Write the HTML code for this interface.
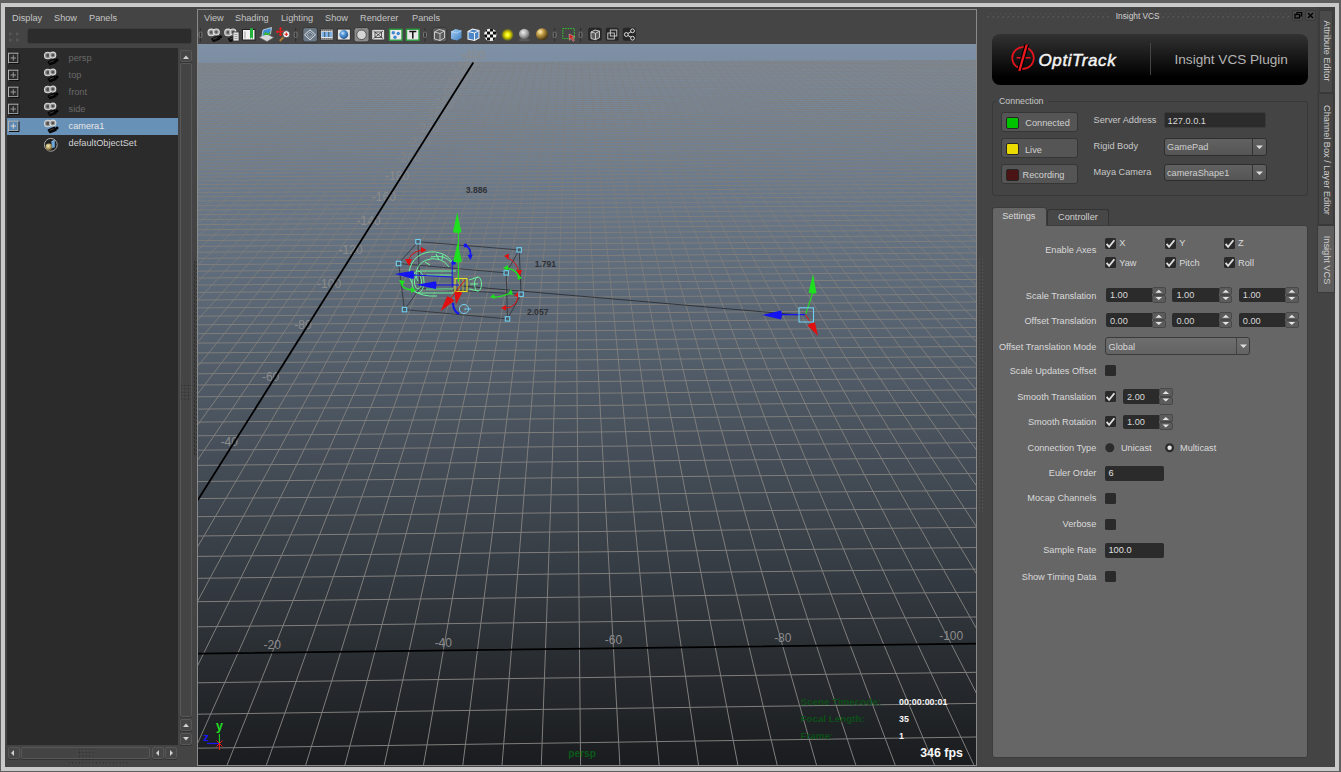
<!DOCTYPE html>
<html><head><meta charset="utf-8">
<style>
*{margin:0;padding:0;box-sizing:border-box}
html,body{width:1341px;height:772px;overflow:hidden}
body{background:#5f5f5f;font-family:"Liberation Sans",sans-serif;position:relative}
.a{position:absolute}
.t{position:absolute;white-space:nowrap;line-height:1;font-size:9.2px;color:#c4c4c4;margin-top:0.7px}
.btn{position:absolute;border:1px solid #333;border-radius:2px;background:#4f4f4f}
.sb{position:absolute;border:1px solid #575757;border-radius:2px;background:#464646;box-shadow:0 1px 0 #333}
</style></head><body>
<!-- frame -->
<div class="a" style="left:1px;top:3px;width:1338px;height:768px;background:#c9c9c9"></div>
<div class="a" style="left:5px;top:7px;width:1330px;height:760px;background:#444"></div>

<!-- ============ OUTLINER ============ -->
<div class="t" style="left:12px;top:13px">Display</div>
<div class="t" style="left:54px;top:13px">Show</div>
<div class="t" style="left:89px;top:13px">Panels</div>
<div class="a" style="left:27px;top:28px;width:165px;height:16px;background:#2c2c2c;border-radius:3px;border:1px solid #3c3c3c"></div>
<!-- list -->
<div class="a" style="left:7px;top:48px;width:171px;height:697px;background:#2b2b2b"></div>
<div class="a" style="left:7px;top:118px;width:171px;height:17px;background:#6891b8"></div>
<div class="t" style="top:53.5px;left:68.6px;color:#6a6a6a;">persp</div>
<div class="t" style="top:70.5px;left:68.6px;color:#6a6a6a;">top</div>
<div class="t" style="top:87.5px;left:68.6px;color:#6a6a6a;">front</div>
<div class="t" style="top:104.5px;left:68.6px;color:#6a6a6a;">side</div>
<div class="t" style="top:121.5px;left:68.6px;color:#e6e6e6;">camera1</div>
<div class="t" style="top:138.5px;left:68.6px;color:#d4d4d4;">defaultObjectSet</div>
<svg class="a" style="left:0;top:0" width="180" height="160"><rect x="8.5" y="53.2" width="9.5" height="9.5" fill="#2b2b2b" stroke="#b0b0b0" stroke-width="1"/><path d="M13.25 55.2v5.5M10.5 58.0h5.5" stroke="#9a9a9a" stroke-width="1"/><path d="M9 63.5h10v-10" stroke="#111" stroke-width="1" fill="none"/><g transform="translate(44,51.7)"><circle cx="3.8" cy="3.8" r="3.3" fill="#8a8a8a" stroke="#d8d8d8" stroke-width="1.1"/><circle cx="3.8" cy="3.8" r="1.4" fill="#4a4a4a"/><circle cx="8.8" cy="3.4" r="3" fill="#8a8a8a" stroke="#d8d8d8" stroke-width="1.1"/><circle cx="8.8" cy="3.4" r="1.2" fill="#4a4a4a"/><path d="M4.5 10.3l5.8-2.3 1.6 2.4-5.8 2.3z" fill="#0a0a0a" stroke="#050505" stroke-width="1.8" stroke-linejoin="round"/><path d="M5.5 10.6l4.3-1.7" stroke="#666" stroke-width="0.6"/><circle cx="13" cy="8.2" r="1.5" fill="#000"/></g><rect x="8.5" y="70.2" width="9.5" height="9.5" fill="#2b2b2b" stroke="#b0b0b0" stroke-width="1"/><path d="M13.25 72.2v5.5M10.5 75.0h5.5" stroke="#9a9a9a" stroke-width="1"/><path d="M9 80.5h10v-10" stroke="#111" stroke-width="1" fill="none"/><g transform="translate(44,68.7)"><circle cx="3.8" cy="3.8" r="3.3" fill="#8a8a8a" stroke="#d8d8d8" stroke-width="1.1"/><circle cx="3.8" cy="3.8" r="1.4" fill="#4a4a4a"/><circle cx="8.8" cy="3.4" r="3" fill="#8a8a8a" stroke="#d8d8d8" stroke-width="1.1"/><circle cx="8.8" cy="3.4" r="1.2" fill="#4a4a4a"/><path d="M4.5 10.3l5.8-2.3 1.6 2.4-5.8 2.3z" fill="#0a0a0a" stroke="#050505" stroke-width="1.8" stroke-linejoin="round"/><path d="M5.5 10.6l4.3-1.7" stroke="#666" stroke-width="0.6"/><circle cx="13" cy="8.2" r="1.5" fill="#000"/></g><rect x="8.5" y="87.2" width="9.5" height="9.5" fill="#2b2b2b" stroke="#b0b0b0" stroke-width="1"/><path d="M13.25 89.2v5.5M10.5 92.0h5.5" stroke="#9a9a9a" stroke-width="1"/><path d="M9 97.5h10v-10" stroke="#111" stroke-width="1" fill="none"/><g transform="translate(44,85.7)"><circle cx="3.8" cy="3.8" r="3.3" fill="#8a8a8a" stroke="#d8d8d8" stroke-width="1.1"/><circle cx="3.8" cy="3.8" r="1.4" fill="#4a4a4a"/><circle cx="8.8" cy="3.4" r="3" fill="#8a8a8a" stroke="#d8d8d8" stroke-width="1.1"/><circle cx="8.8" cy="3.4" r="1.2" fill="#4a4a4a"/><path d="M4.5 10.3l5.8-2.3 1.6 2.4-5.8 2.3z" fill="#0a0a0a" stroke="#050505" stroke-width="1.8" stroke-linejoin="round"/><path d="M5.5 10.6l4.3-1.7" stroke="#666" stroke-width="0.6"/><circle cx="13" cy="8.2" r="1.5" fill="#000"/></g><rect x="8.5" y="104.2" width="9.5" height="9.5" fill="#2b2b2b" stroke="#b0b0b0" stroke-width="1"/><path d="M13.25 106.2v5.5M10.5 109.0h5.5" stroke="#9a9a9a" stroke-width="1"/><path d="M9 114.5h10v-10" stroke="#111" stroke-width="1" fill="none"/><g transform="translate(44,102.7)"><circle cx="3.8" cy="3.8" r="3.3" fill="#8a8a8a" stroke="#d8d8d8" stroke-width="1.1"/><circle cx="3.8" cy="3.8" r="1.4" fill="#4a4a4a"/><circle cx="8.8" cy="3.4" r="3" fill="#8a8a8a" stroke="#d8d8d8" stroke-width="1.1"/><circle cx="8.8" cy="3.4" r="1.2" fill="#4a4a4a"/><path d="M4.5 10.3l5.8-2.3 1.6 2.4-5.8 2.3z" fill="#0a0a0a" stroke="#050505" stroke-width="1.8" stroke-linejoin="round"/><path d="M5.5 10.6l4.3-1.7" stroke="#666" stroke-width="0.6"/><circle cx="13" cy="8.2" r="1.5" fill="#000"/></g><rect x="8.5" y="121.2" width="9.5" height="9.5" fill="#5a86b0" stroke="#b0b0b0" stroke-width="1"/><path d="M13.25 123.2v5.5M10.5 126.0h5.5" stroke="#d8d8d8" stroke-width="1"/><path d="M9 131.5h10v-10" stroke="#111" stroke-width="1" fill="none"/><g transform="translate(44,119.7)"><circle cx="3.8" cy="3.8" r="3.3" fill="#8a8a8a" stroke="#d8d8d8" stroke-width="1.1"/><circle cx="3.8" cy="3.8" r="1.4" fill="#4a4a4a"/><circle cx="8.8" cy="3.4" r="3" fill="#8a8a8a" stroke="#d8d8d8" stroke-width="1.1"/><circle cx="8.8" cy="3.4" r="1.2" fill="#4a4a4a"/><path d="M4.5 10.3l5.8-2.3 1.6 2.4-5.8 2.3z" fill="#0a0a0a" stroke="#050505" stroke-width="1.8" stroke-linejoin="round"/><path d="M5.5 10.6l4.3-1.7" stroke="#666" stroke-width="0.6"/><circle cx="13" cy="8.2" r="1.5" fill="#000"/></g><defs><radialGradient id="gsp" cx="0.4" cy="0.35" r="0.7"><stop offset="0" stop-color="#f4ecc0"/><stop offset="0.5" stop-color="#b8a46a"/><stop offset="1" stop-color="#4a3e1c"/></radialGradient></defs><circle cx="50.8" cy="144.8" r="6.4" fill="#202020" stroke="#a8a8a8" stroke-width="1"/><path d="M51.5 141.6l3.3-1.6v7.2l-3.3 1.2z" fill="#6aa6dc"/><path d="M51.5 141.6l3.3-1.6" stroke="#bfe0ff" stroke-width="0.6"/><circle cx="48.9" cy="147.0" r="3.4" fill="url(#gsp)"/></svg><svg class="a" style="left:7px;top:29px" width="16" height="16"><g fill="#555"><path d="M2 3l4 2-4 2zM9 3l4 2-4 2zM2 9l4 2-4 2zM9 9l4 2-4 2z"/></g></svg>
<!-- v scrollbar -->
<div class="sb" style="left:180px;top:50px;width:12px;height:12px"></div>
<div class="sb" style="left:180px;top:63px;width:12px;height:654px;background:#444"></div>
<div class="sb" style="left:180px;top:719px;width:12px;height:12px"></div>
<div class="sb" style="left:180px;top:733px;width:12px;height:12px"></div>
<!-- h scrollbar -->
<div class="sb" style="left:8px;top:747px;width:12px;height:12px"></div>
<div class="sb" style="left:21px;top:747px;width:129px;height:12px;background:#444"></div>
<div class="sb" style="left:152px;top:747px;width:12px;height:12px"></div>
<div class="sb" style="left:165px;top:747px;width:12px;height:12px"></div>
<svg class="a" style="left:0;top:0" width="200" height="772">
<g fill="#cfcfcf">
<path d="M183 59l3-3.5 3 3.5z"/><path d="M183 727l3-3.5 3 3.5z"/><path d="M183 737l3 3.5 3-3.5z"/>
<path d="M11 753l3-3v6z"/><path d="M156 753l3-3v6z"/><path d="M173 753l-3-3v6z"/>
</g>
</svg>

<svg class="a" style="left:0;top:0" width="200" height="772">
<defs>
<pattern id="dots" width="3.4" height="3.4" patternUnits="userSpaceOnUse"><rect x="0.8" y="0.8" width="1.2" height="1.2" fill="#2a2a2a"/><rect x="2" y="2" width="0.8" height="0.8" fill="#5a5a5a"/></pattern>
<pattern id="zig" width="3" height="4" patternUnits="userSpaceOnUse"><path d="M0 4L3 0V2.2L0 4z" fill="#262626"/></pattern>
</defs>
<rect x="181.2" y="383" width="10" height="17" fill="url(#dots)"/>
<rect x="77" y="749.5" width="17" height="10" fill="url(#dots)"/>
<rect x="67" y="761.5" width="61" height="3.4" fill="url(#dots)"/>
<rect x="194" y="261" width="3" height="195" fill="url(#zig)"/>
</svg>
<!-- ============ VIEWPORT PANEL ============ -->
<div class="a" style="left:197px;top:9px;width:780px;height:757px;border:1px solid #8a8a8a;background:#454545"></div>
<div class="t" style="left:204px;top:13px">View</div>
<div class="t" style="left:235px;top:13px">Shading</div>
<div class="t" style="left:281px;top:13px">Lighting</div>
<div class="t" style="left:325px;top:13px">Show</div>
<div class="t" style="left:360px;top:13px">Renderer</div>
<div class="t" style="left:412px;top:13px">Panels</div>
<svg class="a" style="left:0;top:0" width="650" height="44">
<defs>
<radialGradient id="gbl" cx="0.38" cy="0.35" r="0.7"><stop offset="0" stop-color="#cfe6ff"/><stop offset="0.4" stop-color="#4f95d6"/><stop offset="1" stop-color="#1d4f8a"/></radialGradient>
<radialGradient id="ggr" cx="0.4" cy="0.35" r="0.7"><stop offset="0" stop-color="#f0f0f0"/><stop offset="0.6" stop-color="#9a9a9a"/><stop offset="1" stop-color="#555"/></radialGradient>
<radialGradient id="ggo" cx="0.35" cy="0.3" r="0.75"><stop offset="0" stop-color="#fff6c8"/><stop offset="0.35" stop-color="#c9a24a"/><stop offset="1" stop-color="#3a2a08"/></radialGradient>
<radialGradient id="gye" cx="0.5" cy="0.5" r="0.5"><stop offset="0" stop-color="#ffff90"/><stop offset="0.3" stop-color="#f4f000"/><stop offset="0.65" stop-color="#b8b400" stop-opacity="0.85"/><stop offset="1" stop-color="#888800" stop-opacity="0"/></radialGradient>
<linearGradient id="gcube" x1="0" y1="0" x2="1" y2="1"><stop offset="0" stop-color="#a8d0f4"/><stop offset="1" stop-color="#3f7fc2"/></linearGradient>
</defs>
<path d="M200.5 28v14" stroke="#2e2e2e" stroke-width="1"/><rect x="199.0" y="32" width="3" height="5.5" rx="1.2" fill="none" stroke="#7a7a7a" stroke-width="0.9"/>
<g transform="translate(207.5,28.6)"><circle cx="3.8" cy="3.8" r="3.3" fill="#9a9a9a" stroke="#dcdcdc" stroke-width="1.1"/><circle cx="3.8" cy="3.8" r="1.4" fill="#555"/><circle cx="8.8" cy="3.4" r="3" fill="#9a9a9a" stroke="#dcdcdc" stroke-width="1.1"/><circle cx="8.8" cy="3.4" r="1.2" fill="#555"/><path d="M4.5 10.3l5.8-2.3 1.6 2.4-5.8 2.3z" fill="#111" stroke="#0a0a0a" stroke-width="1.6" stroke-linejoin="round"/><path d="M5.5 10.6l4.3-1.7" stroke="#777" stroke-width="0.6"/><circle cx="13" cy="8.2" r="1.5" fill="#000"/></g>
<g transform="translate(224.2,28.6)"><circle cx="3.8" cy="3.8" r="3.3" fill="#9a9a9a" stroke="#dcdcdc" stroke-width="1.1"/><circle cx="3.8" cy="3.8" r="1.4" fill="#555"/><circle cx="8.8" cy="3.4" r="3" fill="#9a9a9a" stroke="#dcdcdc" stroke-width="1.1"/><circle cx="8.8" cy="3.4" r="1.2" fill="#555"/><path d="M4.5 10.3l5.8-2.3 1.6 2.4-5.8 2.3z" fill="#111" stroke="#0a0a0a" stroke-width="1.6" stroke-linejoin="round"/><path d="M5.5 10.6l4.3-1.7" stroke="#777" stroke-width="0.6"/><circle cx="13" cy="8.2" r="1.5" fill="#000"/></g>
<rect x="233" y="32" width="6" height="9" fill="#e4e4e4" stroke="#333" stroke-width="0.8"/><path d="M234.5 34.5h3M234.5 36.5h3M234.5 38.5h3" stroke="#888" stroke-width="0.8"/>
<rect x="242.5" y="29.5" width="12.5" height="10.5" fill="#f2f2f2" stroke="#222" stroke-width="1"/><path d="M245 31.5v7" stroke="#888" stroke-width="0.8"/><path d="M250 28.2h3v10.8l-1.5-1.6-1.5 1.6z" fill="#22b33a"/>
<path d="M259.5 37.5l7.5 4 6.5-4-7.5-4z" fill="#d8d8d8" stroke="#777" stroke-width="0.6"/><path d="M262 36.5l1-6.5 8.5-2.5-1 6.5z" fill="#3d8cd8" stroke="#ddd" stroke-width="0.8"/><path d="M263 35l2.5-3 3 1.5 2-2.5-0.7 4z" fill="#39b536"/>
<path d="M280.5 27.5v8.5M276.2 31.7h8.6" stroke="#e02018" stroke-width="1.5"/><path d="M280.5 27l-1.8 2.2h3.6zM280.5 36.5l-1.8-2.2h3.6zM275.7 31.7l2.2-1.8v3.6zM285.3 31.7l-2.2-1.8v3.6z" fill="#e02018"/><circle cx="286.3" cy="34.2" r="3.6" fill="#f2f2f2" stroke="#3a3a3a" stroke-width="0.8"/><path d="M286.3 32.4v3.6M284.5 34.2h3.6" stroke="#e02018" stroke-width="1.1"/><path d="M283.4 37.2l-3.6 3.8" stroke="#b07a38" stroke-width="2"/>
<path d="M295.7 28v14" stroke="#2e2e2e" stroke-width="1"/><rect x="294.2" y="32" width="3" height="5.5" rx="1.2" fill="none" stroke="#7a7a7a" stroke-width="0.9"/>
<rect x="302.8" y="27.6" width="14.599999999999966" height="14.4" rx="2.5" fill="#6b7885" stroke="#353535" stroke-width="1"/>
<path d="M304.5 34.8l5.5-5 5.5 5-5.5 5z" fill="none" stroke="#d8dde4" stroke-width="1"/><path d="M307 34.8l3-2.7 3 2.7-3 2.7z" fill="none" stroke="#aeb6c0" stroke-width="0.8"/>
<rect x="320.6" y="29.1" width="12.5" height="10.9" fill="#e8e8e8" stroke="#333" stroke-width="0.9"/><rect x="321.6" y="32" width="10.5" height="5" fill="#7fb4ea"/><path d="M321.6 30.5h10.5M321.6 38.6h10.5" stroke="#222" stroke-width="1.4" stroke-dasharray="1 1"/><path d="M324.7 32v5M328.8 32v5" stroke="#333" stroke-width="0.8"/>
<rect x="337.3" y="29.1" width="13" height="10.9" fill="#e4e4e4" stroke="#2a2a2a" stroke-width="0.9"/><circle cx="343.8" cy="34.5" r="4.4" fill="url(#gbl)"/>
<rect x="354" y="27.6" width="15.100000000000023" height="14.4" rx="2.5" fill="#8a8a8a" stroke="#353535" stroke-width="1"/>
<circle cx="361.5" cy="34.8" r="4.8" fill="#d6d6d6" stroke="#555" stroke-width="1"/>
<rect x="371.7" y="29.3" width="13" height="10.7" rx="1.5" fill="#dcdcdc" stroke="#333" stroke-width="0.9"/><path d="M373.5 31l9.5 7.5M383 31l-9.5 7.5M375 32h6.5v5.5h-6.5z" stroke="#333" stroke-width="0.8" fill="none"/>
<rect x="389.5" y="29.3" width="12.5" height="10.9" fill="#e9e9e9" stroke="#2ea043" stroke-width="1.4"/><circle cx="393.3" cy="32.8" r="1.7" fill="#3f86d0"/><circle cx="398.2" cy="33.5" r="1.7" fill="#3f86d0"/><circle cx="395" cy="37.3" r="1.7" fill="#3f86d0"/>
<rect x="406.5" y="29.3" width="12.5" height="10.9" fill="#e9e9e9" stroke="#2ea043" stroke-width="1.4"/><path d="M409.3 31.5h7M412.8 31.5v7" stroke="#111" stroke-width="1.5"/>
<path d="M425 28v14" stroke="#2e2e2e" stroke-width="1"/><rect x="423.5" y="32" width="3" height="5.5" rx="1.2" fill="none" stroke="#7a7a7a" stroke-width="0.9"/>
<rect x="432.2" y="27.6" width="14.699999999999989" height="14.4" rx="2.5" fill="#5a5a5a" stroke="#353535" stroke-width="1"/>
<path d="M434.5 32l4.5-2.5 5.5 1.5v7l-4.5 2.5-5.5-1.5z M434.5 32l5.5 1.5 4.5-2.5 M440 33.5v7" fill="none" stroke="#d4d4d4" stroke-width="0.9"/>
<path d="M451 31.5l4.5-2.5 6 1.5v7.5l-4.5 2.5-6-1.5z" fill="url(#gcube)"/><path d="M451 31.5l6 1.5 4.5-2.5" fill="none" stroke="#cfe6ff" stroke-width="0.6"/>
<path d="M468 31.5l4.5-2.5 6.5 1.5v7.5l-4.5 2.5-6.5-1.5z" fill="#4c86c6" stroke="#f0f0f0" stroke-width="1.1"/><path d="M468 31.5l6.5 1.5 4.5-2.5M474.5 33v8" fill="none" stroke="#f0f0f0" stroke-width="1"/>
<clipPath id="csp"><circle cx="490.3" cy="34.8" r="6.3"/></clipPath><g clip-path="url(#csp)"><rect x="484" y="28.5" width="12.6" height="12.6" fill="#f2f2f2"/><path d="M484 28.5h3v3h-3zM490 28.5h3v3h-3zM487 31.5h3v3h-3zM493 31.5h3v3h-3zM484 34.5h3v3h-3zM490 34.5h3v3h-3zM487 37.5h3v3h-3zM493 37.5h3v3h-3z" fill="#111"/></g>
<circle cx="507.5" cy="34.8" r="6.5" fill="url(#gye)"/>
<ellipse cx="524.3" cy="40" rx="5.5" ry="1.3" fill="#5a5a5a"/><circle cx="524.3" cy="34" r="5.3" fill="url(#ggr)"/>
<circle cx="542" cy="34.3" r="6" fill="url(#ggo)"/>
<path d="M554.7 28v14" stroke="#2e2e2e" stroke-width="1"/><rect x="553.2" y="32" width="3" height="5.5" rx="1.2" fill="none" stroke="#7a7a7a" stroke-width="0.9"/>
<rect x="562.8" y="28.6" width="11.5" height="10" fill="none" stroke="#2fcf2f" stroke-width="1" stroke-dasharray="1.5 1"/><path d="M569 34l5.8 2.8-2.4 0.8 2 2.8-1.3 0.9-2-2.8-1.7 1.7z" fill="#d02020" stroke="#eee" stroke-width="0.4"/>
<path d="M580.6 28v14" stroke="#2e2e2e" stroke-width="1"/><rect x="579.1" y="32" width="3" height="5.5" rx="1.2" fill="none" stroke="#7a7a7a" stroke-width="0.9"/>
<rect x="588.2" y="27.8" width="13.5" height="13" rx="2" fill="#262626"/>
<rect x="605.7" y="27.8" width="13.0" height="13" rx="2" fill="#262626"/>
<rect x="622.7" y="27.8" width="13.0" height="13" rx="2" fill="#262626"/>
<path d="M591 32l4-2 4.5 1.2v6.5l-4 2-4.5-1.2z M591 32l4.5 1.2 4-2 M595.5 33.2v6.5" fill="#5c5c5c" stroke="#d8d8d8" stroke-width="0.9"/>
<rect x="607.8" y="33" width="6.5" height="6" fill="none" stroke="#d0d0d0" stroke-width="0.9"/><rect x="610.3" y="30" width="6.5" height="6" fill="none" stroke="#d0d0d0" stroke-width="0.9"/>
<path d="M626.3 34.5l6-3.5M626.3 34.5l6 3.5" stroke="#d8d8d8" stroke-width="1"/><circle cx="626.3" cy="34.5" r="1.9" fill="#262626" stroke="#e0e0e0" stroke-width="1"/><circle cx="632.5" cy="30.8" r="1.9" fill="#262626" stroke="#e0e0e0" stroke-width="1"/><circle cx="632.5" cy="38.2" r="1.9" fill="#262626" stroke="#e0e0e0" stroke-width="1"/>
</svg>
<svg class="a" style="left:0;top:0" width="1341" height="772">
<defs>
<linearGradient id="vg" x1="0" y1="44" x2="0" y2="765" gradientUnits="userSpaceOnUse">
<stop offset="0" stop-color="#7f91a6"/>
<stop offset="1" stop-color="#1a1c1e"/>
</linearGradient>
<linearGradient id="amg" x1="0" y1="60" x2="0" y2="380" gradientUnits="userSpaceOnUse"><stop offset="0" stop-color="#fff" stop-opacity="0.45"/><stop offset="1" stop-color="#fff" stop-opacity="1"/></linearGradient>
<mask id="amask" maskUnits="userSpaceOnUse" x="190" y="40" width="800" height="730"><rect x="190" y="40" width="800" height="730" fill="url(#amg)"/></mask>
<clipPath id="vc"><rect x="198" y="44" width="778" height="721"/></clipPath>
</defs>
<rect x="198" y="44" width="778" height="721" fill="url(#vg)"/>
<g clip-path="url(#vc)">
<path d="M197.5 86.3L976.5 83.0M197.5 84.7L976.5 81.4M197.5 83.1L976.5 79.9M197.5 81.5L976.5 78.3M197.5 80.0L976.5 76.8M197.5 78.5L976.5 75.3M197.5 77.0L976.5 73.9M197.5 75.6L976.5 72.4M197.5 74.1L976.5 71.0M197.5 72.7L976.5 69.6M197.5 71.3L976.5 68.2M197.5 70.0L976.5 66.9M197.5 68.6L976.5 65.6M197.5 67.3L976.5 64.3M197.5 66.0L976.5 63.0M197.5 64.8L976.5 61.7M197.5 63.5L976.5 60.5" stroke="#7f7e7c" stroke-opacity="0.65" fill="none"/>
<path d="M197.5 88.0L976.5 84.7" stroke="#7f7e7c" stroke-opacity="0.66" fill="none"/>
<path d="M197.5 89.6L976.5 86.3" stroke="#7f7e7c" stroke-opacity="0.67" fill="none"/>
<path d="M197.5 91.3L976.5 88.0" stroke="#7f7e7c" stroke-opacity="0.68" fill="none"/>
<path d="M197.5 93.1L976.5 89.7" stroke="#7f7e7c" stroke-opacity="0.7" fill="none"/>
<path d="M197.5 94.9L976.5 91.5" stroke="#7f7e7c" stroke-opacity="0.71" fill="none"/>
<path d="M197.5 96.7L976.5 93.3" stroke="#7f7e7c" stroke-opacity="0.72" fill="none"/>
<path d="M197.5 98.5L976.5 95.1" stroke="#7f7e7c" stroke-opacity="0.74" fill="none"/>
<path d="M197.5 100.4L976.5 96.9" stroke="#7f7e7c" stroke-opacity="0.75" fill="none"/>
<path d="M197.5 102.3L976.5 98.8" stroke="#7f7e7c" stroke-opacity="0.77" fill="none"/>
<path d="M197.5 104.3L976.5 100.8" stroke="#7f7e7c" stroke-opacity="0.78" fill="none"/>
<path d="M197.5 106.2L976.5 102.7" stroke="#7f7e7c" stroke-opacity="0.8" fill="none"/>
<path d="M197.5 108.3L976.5 104.7" stroke="#7f7e7c" stroke-opacity="0.81" fill="none"/>
<path d="M197.5 110.4L976.5 106.8" stroke="#7f7e7c" stroke-opacity="0.83" fill="none"/>
<path d="M197.5 112.5L976.5 108.9" stroke="#7f7e7c" stroke-opacity="0.85" fill="none"/>
<path d="M197.5 114.6L976.5 111.0" stroke="#7f7e7c" stroke-opacity="0.86" fill="none"/>
<path d="M197.5 116.8L976.5 113.2" stroke="#7f7e7c" stroke-opacity="0.88" fill="none"/>
<path d="M197.5 119.1L976.5 115.4" stroke="#7f7e7c" stroke-opacity="0.9" fill="none"/>
<path d="M197.5 121.4L976.5 117.7" stroke="#7f7e7c" stroke-opacity="0.92" fill="none"/>
<path d="M197.5 123.7L976.5 120.0" stroke="#7f7e7c" stroke-opacity="0.94" fill="none"/>
<path d="M197.5 126.2L976.5 122.4" stroke="#7f7e7c" stroke-opacity="0.96" fill="none"/>
<path d="M197.5 128.6L976.5 124.8" stroke="#7f7e7c" stroke-opacity="0.98" fill="none"/>
<path d="M197.5 748.2L976.5 737.0M197.5 714.2L976.5 703.4M197.5 682.8L976.5 672.3M197.5 626.8L976.5 617.0M197.5 601.7L976.5 592.2M197.5 578.3L976.5 569.1M197.5 556.4L976.5 547.5M197.5 536.0L976.5 527.3M197.5 516.7L976.5 508.3M197.5 498.6L976.5 490.4M197.5 481.5L976.5 473.5M197.5 465.4L976.5 457.6M197.5 450.2L976.5 442.6M197.5 435.8L976.5 428.3M197.5 422.1L976.5 414.8M197.5 409.1L976.5 402.0M197.5 396.8L976.5 389.8M197.5 385.0L976.5 378.1M197.5 373.8L976.5 367.1M197.5 363.1L976.5 356.5M197.5 352.9L976.5 346.4M197.5 343.1L976.5 336.7M197.5 333.7L976.5 327.5M197.5 324.8L976.5 318.6M197.5 316.2L976.5 310.1M197.5 307.9L976.5 302.0M197.5 300.0L976.5 294.1M197.5 292.4L976.5 286.6M197.5 285.0L976.5 279.4M197.5 278.0L976.5 272.4M197.5 271.2L976.5 265.7M197.5 264.6L976.5 259.2M197.5 258.3L976.5 252.9M197.5 252.2L976.5 246.9M197.5 246.3L976.5 241.1M197.5 240.6L976.5 235.5M197.5 235.1L976.5 230.0M197.5 229.7L976.5 224.7M197.5 224.6L976.5 219.6M197.5 219.6L976.5 214.7M197.5 214.7L976.5 209.9M197.5 210.0L976.5 205.2M197.5 205.5L976.5 200.7M197.5 201.0L976.5 196.4M197.5 196.7L976.5 192.1M197.5 192.6L976.5 188.0M197.5 188.5L976.5 184.0M197.5 184.6L976.5 180.1M197.5 180.7L976.5 176.3M197.5 177.0L976.5 172.6M197.5 173.4L976.5 169.0M197.5 169.8L976.5 165.5M197.5 166.4L976.5 162.1M197.5 163.0L976.5 158.8M197.5 159.8L976.5 155.6M197.5 156.6L976.5 152.4M197.5 153.5L976.5 149.4M197.5 150.4L976.5 146.4M197.5 147.5L976.5 143.5M197.5 144.6L976.5 140.6M197.5 141.8L976.5 137.8M197.5 139.0L976.5 135.1M197.5 136.3L976.5 132.4M197.5 133.7L976.5 129.8M197.5 131.1L976.5 127.3" stroke="#7f7e7c" stroke-opacity="1.0" fill="none"/>
<path d="M197.5 64.0L198.6 63.5M197.5 67.1L205.8 63.5M197.5 70.3L213.1 63.4M197.5 73.7L220.4 63.4M197.5 77.2L227.6 63.4M197.5 80.9L234.9 63.4M197.5 84.7L242.1 63.3M197.5 88.7L249.4 63.3M197.5 92.9L256.6 63.3M197.5 97.3L263.9 63.2M197.5 101.9L271.1 63.2M197.5 106.7L278.3 63.2M197.5 111.7L285.6 63.2M197.5 117.0L292.8 63.1M197.5 122.6L300.1 63.1M197.5 128.5L307.3 63.1M197.5 134.8L314.5 63.0M197.5 141.4L321.8 63.0M197.5 148.3L329.0 63.0M197.5 155.7L336.2 63.0M197.5 163.6L343.5 62.9M197.5 172.0L350.7 62.9M197.5 180.9L357.9 62.9M197.5 190.5L365.1 62.8M197.5 200.8L372.3 62.8M197.5 211.8L379.6 62.8M197.5 223.7L386.8 62.8M197.5 236.5L394.0 62.7M197.5 250.4L401.2 62.7M197.5 265.5L408.4 62.7M197.5 282.0L415.6 62.7M197.5 300.2L422.9 62.6M197.5 320.1L430.1 62.6M197.5 342.2L437.3 62.6M197.5 366.7L444.5 62.5M197.5 394.2L451.7 62.5M197.5 425.1L458.9 62.5M197.5 460.2L466.1 62.5M197.5 547.0L480.5 62.4M197.5 601.4L487.7 62.4M197.5 665.9L494.9 62.3M197.5 743.5L502.1 62.3M227.1 765.0L509.3 62.3M266.4 765.0L516.4 62.3M305.7 765.0L523.6 62.2M344.9 765.0L530.8 62.2M384.2 765.0L538.0 62.2M423.5 765.0L545.2 62.2M462.8 765.0L552.4 62.1M502.0 765.0L559.5 62.1M541.3 765.0L566.7 62.1M580.6 765.0L573.9 62.0M619.9 765.0L581.1 62.0M659.2 765.0L588.3 62.0M698.5 765.0L595.4 62.0M737.9 765.0L602.6 61.9M777.2 765.0L609.8 61.9M816.5 765.0L616.9 61.9M855.8 765.0L624.1 61.8M895.2 765.0L631.3 61.8M934.5 765.0L638.4 61.8M973.9 765.0L645.6 61.8M976.5 693.4L652.7 61.7M976.5 628.7L659.9 61.7M976.5 573.9L667.1 61.7M976.5 526.8L674.2 61.7M976.5 485.9L681.4 61.6M976.5 450.0L688.5 61.6M976.5 418.3L695.7 61.6M976.5 390.1L702.8 61.5M976.5 364.8L710.0 61.5M976.5 342.0L717.1 61.5M976.5 321.4L724.2 61.5M976.5 302.6L731.4 61.4M976.5 285.4L738.5 61.4M976.5 269.7L745.7 61.4M976.5 255.2L752.8 61.3M976.5 241.8L759.9 61.3M976.5 229.4L767.1 61.3M976.5 217.9L774.2 61.3M976.5 207.2L781.3 61.2M976.5 197.2L788.5 61.2M976.5 187.8L795.6 61.2M976.5 179.0L802.7 61.2M976.5 170.7L809.8 61.1M976.5 162.9L817.0 61.1M976.5 155.6L824.1 61.1M976.5 148.6L831.2 61.0M976.5 142.1L838.3 61.0M976.5 135.9L845.4 61.0M976.5 130.0L852.6 61.0M976.5 124.4L859.7 60.9M976.5 119.0L866.8 60.9M976.5 113.9L873.9 60.9M976.5 109.1L881.0 60.9M976.5 104.5L888.1 60.8M976.5 100.0L895.2 60.8M976.5 95.8L902.3 60.8M976.5 91.7L909.4 60.7M976.5 87.9L916.5 60.7M976.5 84.1L923.6 60.7M976.5 80.5L930.7 60.7M976.5 77.1L937.8 60.6M976.5 73.8L944.9 60.6M976.5 70.6L952.0 60.6M976.5 67.6L959.1 60.6M976.5 64.6L966.2 60.5M976.5 61.7L973.3 60.5" stroke="#7f7e7c" fill="none" mask="url(#amask)"/>

<path d="M418 241.7L519.2 249.9" stroke="#34373c" stroke-width="0.9" fill="none"/>
<path d="M398.6 263.5L506.2 272.9" stroke="#34373c" stroke-width="0.9" fill="none"/>
<path d="M418 241.7L398.6 263.5" stroke="#34373c" stroke-width="0.9" fill="none"/>
<path d="M519.2 249.9L506.2 272.9" stroke="#34373c" stroke-width="0.9" fill="none"/>
<path d="M398.6 263.5L404.5 309.6" stroke="#34373c" stroke-width="0.9" fill="none"/>
<path d="M506.2 272.9L507.5 318.9" stroke="#34373c" stroke-width="0.9" fill="none"/>
<path d="M404.5 309.6L507.5 318.9" stroke="#34373c" stroke-width="0.9" fill="none"/>
<path d="M519.2 249.9L521.1 294.2" stroke="#34373c" stroke-width="0.9" fill="none"/>
<path d="M521.1 294.2L507.5 318.9" stroke="#34373c" stroke-width="0.9" fill="none"/>
<path d="M418 241.7L420 288" stroke="#34373c" stroke-width="0.9" fill="none"/>
<path d="M420 288L521.1 294.2" stroke="#34373c" stroke-width="0.9" fill="none"/>
<path d="M420 288L404.5 309.6" stroke="#34373c" stroke-width="0.9" fill="none"/>
<path d="M462 286L800 315" stroke="#2c2f33" stroke-width="0.9" fill="none"/>
<g fill="none" stroke="#6cf29a" stroke-width="1"><path d="M412 283a23 21 0 0 1 41-20"/><path d="M418 281a17 15 0 0 1 31-14"/><path d="M431 257q12-3 20 5M436 254l3 6M443 254l-1 6M425 262l5 3"/><ellipse cx="418" cy="282" rx="6" ry="11"/><ellipse cx="418" cy="282" rx="3.5" ry="7"/><path d="M418 271h38M418 293h38M426 275h27M426 289h27M412 290q10 7 25 6"/><ellipse cx="478" cy="284" rx="3.5" ry="7"/><path d="M469 280l9-3M469 289l9 2M470 284h8"/></g>
<rect x="455" y="278.5" width="12" height="13" fill="none" stroke="#e8e020" stroke-width="1.1"/><path d="M459 278.5v13M463 278.5v13" stroke="#e8e020" stroke-width="0.7"/>
<path d="M413 275L452 277M436 285L459 285M452.2 262V287" stroke="#1414f0" stroke-width="1" fill="none"/>
<path d="M394.7 273.9L413.3 270.8Q415 274.9 413.3 279z" fill="#1414f0"/><path d="M416.4 284.8L435.9 281.3Q437.6 285.1 435.9 289z" fill="#1414f0"/>
<circle cx="453.8" cy="262.5" r="2.2" fill="#1414f0"/>
<path d="M466 246q5 2 4.5 10" stroke="#1414f0" stroke-width="1.8" fill="none"/><path d="M467.5 255l3 5 2.2-5.5z" fill="#1414f0"/><circle cx="465.5" cy="245.5" r="2" fill="#1414f0"/>
<path d="M453 303q0 8 6 11" stroke="#1414f0" stroke-width="2" fill="none"/>
<path d="M458.4 231V282" stroke="#1ee01e" stroke-width="1.2"/><path d="M457.2 212.4L453 232Q457.3 234 461.5 232z" fill="#1ee01e"/><path d="M457.6 242.8L453.2 261.5Q457.6 263.5 462 261.5z" fill="#1ee01e"/>
<path d="M465 280L446 304" stroke="#e01010" stroke-width="0.9" fill="none"/>
<path d="M440.5 311.2L447 296.5Q452 297 454 301z" fill="#e01010"/><path d="M456 304.2L454.5 292.5Q458.5 291 462.3 292.5z" fill="#e01010"/>
<circle cx="464" cy="309" r="4.6" fill="none" stroke="#6fd0f0" stroke-width="1"/><path d="M464 309h7" stroke="#6fd0f0" stroke-width="0.9"/>
<path d="M408 262q2-10 14-12" stroke="#e01010" stroke-width="1" fill="none"/><path d="M421 247l5.5 3-5.5 3z" fill="#e01010"/><path d="M405 259l4 7 3-7z" fill="#e01010"/>
<path d="M507 258q10 3 12 15" stroke="#e01010" stroke-width="1" fill="none"/><path d="M504 256l5-2.5-0.5 5.5z" fill="#e01010"/><path d="M516 270l4 6 2-6z" fill="#e01010"/>
<path d="M518 296q-1 11-12 12" stroke="#e01010" stroke-width="1" fill="none"/><path d="M514 296l5-5 2 6z" fill="#e01010"/><path d="M506 305l-5 3 5 2.5z" fill="#e01010"/>
<path d="M401 283q2 7 13 7" stroke="#1ee01e" stroke-width="1.3" fill="none"/><path d="M399 280l3 6 3-5z" fill="#1ee01e"/><path d="M411 287l5 3-5 3z" fill="#1ee01e"/>
<path d="M505 268q10 0 15 10" stroke="#1ee01e" stroke-width="1.3" fill="none"/><path d="M503 268l5-3v6z" fill="#1ee01e"/><path d="M517 274l5 4-4 2z" fill="#1ee01e"/>
<path d="M510 293q-8 4-17 4" stroke="#1ee01e" stroke-width="1.3" fill="none"/><path d="M511 289l2 6-5-1z" fill="#1ee01e"/><path d="M494 294l-4 3 5 2z" fill="#1ee01e"/>
<rect x="415.8" y="239.5" width="4.4" height="4.4" fill="#4a5a66" stroke="#6fd0f0" stroke-width="1.1"/>
<rect x="396.40000000000003" y="261.3" width="4.4" height="4.4" fill="#4a5a66" stroke="#6fd0f0" stroke-width="1.1"/>
<rect x="402.3" y="307.40000000000003" width="4.4" height="4.4" fill="#4a5a66" stroke="#6fd0f0" stroke-width="1.1"/>
<rect x="517.0" y="247.70000000000002" width="4.4" height="4.4" fill="#4a5a66" stroke="#6fd0f0" stroke-width="1.1"/>
<rect x="504.0" y="270.7" width="4.4" height="4.4" fill="#4a5a66" stroke="#6fd0f0" stroke-width="1.1"/>
<rect x="518.9" y="292.0" width="4.4" height="4.4" fill="#4a5a66" stroke="#6fd0f0" stroke-width="1.1"/>
<rect x="505.3" y="316.7" width="4.4" height="4.4" fill="#4a5a66" stroke="#6fd0f0" stroke-width="1.1"/>
<text x="476.5" y="192.5" text-anchor="middle" font-family="Liberation Sans" font-weight="bold" font-size="8.6" fill="#2e3035">3.886</text>
<text x="545.4" y="267.2" text-anchor="middle" font-family="Liberation Sans" font-weight="bold" font-size="8.6" fill="#2e3035">1.791</text>
<text x="537.7" y="315.2" text-anchor="middle" font-family="Liberation Sans" font-weight="bold" font-size="8.6" fill="#2e3035">2.057</text>
<text x="272.2" y="648.8" text-anchor="middle" font-family="Liberation Sans" font-size="12" fill="#8c8c8c" fill-opacity="1">-20</text>
<text x="443.3" y="646.6" text-anchor="middle" font-family="Liberation Sans" font-size="12" fill="#8c8c8c" fill-opacity="1">-40</text>
<text x="613.5" y="644.4" text-anchor="middle" font-family="Liberation Sans" font-size="12" fill="#8c8c8c" fill-opacity="1">-60</text>
<text x="782.8" y="642.2" text-anchor="middle" font-family="Liberation Sans" font-size="12" fill="#8c8c8c" fill-opacity="1">-80</text>
<text x="951.2" y="640.0" text-anchor="middle" font-family="Liberation Sans" font-size="12" fill="#8c8c8c" fill-opacity="1">-100</text>
<text x="229.3" y="446.2" text-anchor="middle" font-family="Liberation Sans" font-size="12" fill="#8c8c8c" fill-opacity="1">-40</text>
<text x="270.6" y="380.7" text-anchor="middle" font-family="Liberation Sans" font-size="12" fill="#8c8c8c" fill-opacity="1">-60</text>
<text x="303.0" y="329.2" text-anchor="middle" font-family="Liberation Sans" font-size="12" fill="#8c8c8c" fill-opacity="1">-80</text>
<text x="329.1" y="287.7" text-anchor="middle" font-family="Liberation Sans" font-size="12" fill="#8c8c8c" fill-opacity="1">-100</text>
<text x="350.6" y="253.5" text-anchor="middle" font-family="Liberation Sans" font-size="12" fill="#8c8c8c" fill-opacity="1">-120</text>
<text x="368.6" y="224.9" text-anchor="middle" font-family="Liberation Sans" font-size="12" fill="#8c8c8c" fill-opacity="1">-140</text>
<text x="383.9" y="200.6" text-anchor="middle" font-family="Liberation Sans" font-size="12" fill="#8c8c8c" fill-opacity="1">-160</text>
<text x="397.1" y="179.7" text-anchor="middle" font-family="Liberation Sans" font-size="12" fill="#8c8c8c" fill-opacity="1">-180</text>
<text x="408.6" y="161.5" text-anchor="middle" font-family="Liberation Sans" font-size="12" fill="#8c8c8c" fill-opacity="0.5">-200</text>
<text x="418.6" y="145.6" text-anchor="middle" font-family="Liberation Sans" font-size="12" fill="#8c8c8c" fill-opacity="0.5">-220</text>
<text x="427.5" y="131.5" text-anchor="middle" font-family="Liberation Sans" font-size="12" fill="#8c8c8c" fill-opacity="0.5">-240</text>
<text x="435.4" y="118.9" text-anchor="middle" font-family="Liberation Sans" font-size="12" fill="#8c8c8c" fill-opacity="0.5">-260</text>
<text x="442.5" y="107.6" text-anchor="middle" font-family="Liberation Sans" font-size="12" fill="#8c8c8c" fill-opacity="0.5">-280</text>
<text x="448.9" y="97.5" text-anchor="middle" font-family="Liberation Sans" font-size="12" fill="#8c8c8c" fill-opacity="0.5">-300</text>
<text x="454.7" y="88.3" text-anchor="middle" font-family="Liberation Sans" font-size="12" fill="#8c8c8c" fill-opacity="0.5">-320</text>
<text x="460.0" y="79.9" text-anchor="middle" font-family="Liberation Sans" font-size="12" fill="#8c8c8c" fill-opacity="0.5">-340</text>
<text x="464.8" y="72.2" text-anchor="middle" font-family="Liberation Sans" font-size="12" fill="#8c8c8c" fill-opacity="0.5">-360</text>
<text x="469.2" y="65.2" text-anchor="middle" font-family="Liberation Sans" font-size="12" fill="#8c8c8c" fill-opacity="0.5">-380</text>
<text x="473.3" y="58.7" text-anchor="middle" font-family="Liberation Sans" font-size="12" fill="#8c8c8c" fill-opacity="1">-400</text>
<path d="M805.5 314.6L812.5 293.5" stroke="#1ee01e" stroke-width="1.1"/><path d="M813 274L808.5 292.5Q812.5 294.5 816.5 293z" fill="#1ee01e"/>
<path d="M805.5 314.6H781" stroke="#1414f0" stroke-width="1.3"/><path d="M762 315L781 310.5Q783 315 781 319.5z" fill="#1414f0"/>
<path d="M805.5 314.6L810 322" stroke="#e01010" stroke-width="1"/><path d="M818 336L807.5 325.5Q811 322 815 322.5z" fill="#e01010"/>
<rect x="799" y="307.8" width="14.5" height="14.2" fill="none" stroke="#6fd0f0" stroke-width="1.1"/>
<path d="M219.4 734V743.5" stroke="#20e020" stroke-width="1"/><path d="M207 743.5H219.4" stroke="#1818ff" stroke-width="1.2"/><path d="M219.4 743.5V750M216.5 740.5l6 6M222.5 740.5l-6 6" stroke="#ff1818" stroke-width="1"/>
<text x="216" y="730" font-family="Liberation Sans" font-weight="bold" font-size="12.5" fill="#20e020">y</text>
<text x="203.3" y="740.6" font-family="Liberation Sans" font-weight="bold" font-size="11.5" fill="#1818ff">z</text>
<path d="M197.5 500.5L473.3 62.4M197.5 653.7L976.5 643.7" stroke="#000" stroke-width="1.8" fill="none"/>
</g>
</svg>
<svg class="a" style="left:0;top:0" width="1341" height="772">
<text x="800.5" y="705" text-anchor="start" font-family="Liberation Sans" font-weight="bold" font-size="9.8" fill="#0c4f18">Scene Timecode:</text>
<text x="800.5" y="722.2" text-anchor="start" font-family="Liberation Sans" font-weight="bold" font-size="9.8" fill="#0c4f18">Focal Length:</text>
<text x="800.5" y="739.4" text-anchor="start" font-family="Liberation Sans" font-weight="bold" font-size="9.8" fill="#0c4f18">Frame:</text>
<text x="899" y="705" text-anchor="start" font-family="Liberation Sans" font-weight="bold" font-size="8.9" fill="#f4f4f4">00:00:00:01</text>
<text x="899" y="722.2" text-anchor="start" font-family="Liberation Sans" font-weight="bold" font-size="8.9" fill="#f4f4f4">35</text>
<text x="899" y="739.4" text-anchor="start" font-family="Liberation Sans" font-weight="bold" font-size="8.9" fill="#f4f4f4">1</text>
<text x="920.2" y="757.1" text-anchor="start" font-family="Liberation Sans" font-weight="bold" font-size="12.4" fill="#f8f8f8">346 fps</text>
<text x="568.2" y="756.5" text-anchor="start" font-family="Liberation Sans" font-weight="bold" font-size="10.2" fill="#0a5a1a">persp</text>
</svg>

<!-- ============ RIGHT PANEL ============ -->
<svg class="a" style="left:978px;top:258px" width="6" height="256"><defs><pattern id="vd" width="3" height="3.4" patternUnits="userSpaceOnUse"><rect x="1" y="1" width="1" height="1" fill="#5c5c5c"/><rect x="0" y="2.2" width="1" height="1" fill="#363636"/></pattern></defs><rect x="1" y="0" width="4" height="255" fill="url(#vd)"/></svg>
<svg class="a" style="left:980px;top:10px" width="320" height="14"><defs><pattern id="grip" width="5" height="6" patternUnits="userSpaceOnUse"><rect x="3" y="0" width="1" height="1" fill="#5e5e5e"/><rect x="2" y="1" width="1" height="1" fill="#5a5a5a"/><rect x="1" y="2" width="1" height="1" fill="#5e5e5e"/><rect x="0" y="3" width="1" height="1" fill="#555"/></pattern></defs><rect x="6" y="3" width="123" height="5" fill="url(#grip)"/><rect x="142" y="3" width="167" height="5" fill="url(#grip)"/></svg><div class="t" style="top:11.7px;left:1115.8px;font-size:8.3px;color:#d0d0d0;">Insight VCS</div>
<div class="a" style="left:1292px;top:10px;width:11px;height:11px;border:1px solid #3a3a3a;border-radius:2px;background:#4a4a4a"></div><div class="a" style="left:1305px;top:10px;width:11px;height:11px;border:1px solid #3a3a3a;border-radius:2px;background:#4a4a4a"></div><svg class="a" style="left:1292px;top:10px" width="24" height="11"><g fill="none" stroke="#000" stroke-width="1.2"><rect x="3" y="4.5" width="4.5" height="3.5"/><path d="M5 4.5V2.5h4.5v3.5H7.5"/><path d="M16 3l5 5M21 3l-5 5"/></g></svg><div class="a" style="left:992px;top:33.5px;width:316px;height:51px;border-radius:8px;background:linear-gradient(#323232,#000 85%);"></div><div class="a" style="left:1150px;top:43px;width:1px;height:32px;background:#444"></div><div class="t" style="top:52.2px;left:1174.5px;font-size:13.6px;color:#b4b4b4;">Insight VCS Plugin</div>
<svg class="a" style="left:1005px;top:40px" width="130" height="36"><circle cx="18" cy="18" r="10.8" fill="none" stroke="#e8141c" stroke-width="1.7"/><path d="M21.8 4.5L14.3 31" stroke="#000" stroke-width="4.6"/><path d="M21.8 4.5L14.3 31" stroke="#ee1a20" stroke-width="2.3"/><path d="M11.5 17.7h4M20.5 17.7h5" stroke="#e8141c" stroke-width="1.6"/><text x="33.5" y="26" font-family="Liberation Sans" font-style="italic" font-size="17" fill="#f4f4f4" stroke="#f4f4f4" stroke-width="0.45" letter-spacing="0.6">OptiTrack</text></svg><div class="a" style="left:992px;top:101px;width:316px;height:95px;border:1px solid #383838;border-radius:3px"></div><div class="a" style="left:996px;top:96px;width:52px;height:9px;background:#444"></div><div class="t" style="top:96.4px;left:999.0px;font-size:8.8px;color:#c8c8c8;">Connection</div>
<div class="a" style="left:1001px;top:111.8px;width:76.5px;height:20.5px;border:1px solid #363636;border-radius:3px;background:#555"></div><div class="a" style="left:1006px;top:116.8px;width:13px;height:12.5px;border:1px solid #252525;border-radius:2px;background:#00c400"></div><div class="t" style="top:118.7px;left:1025.3px;color:#d2d2d2;">Connected</div>
<div class="a" style="left:1001px;top:137.5px;width:76.5px;height:20.9px;border:1px solid #363636;border-radius:3px;background:#555"></div><div class="a" style="left:1006px;top:142.5px;width:13px;height:12.5px;border:1px solid #252525;border-radius:2px;background:#ecdb00"></div><div class="t" style="top:145.1px;left:1025.0px;color:#d2d2d2;">Live</div>
<div class="a" style="left:1001px;top:163.6px;width:76.5px;height:20.5px;border:1px solid #363636;border-radius:3px;background:#555"></div><div class="a" style="left:1006px;top:168.6px;width:13px;height:12.5px;border:1px solid #252525;border-radius:2px;background:#4a1414"></div><div class="t" style="top:169.9px;left:1022.5px;color:#d2d2d2;">Recording</div>
<div class="t" style="top:115.5px;left:1093.6px;color:#c8c8c8;">Server Address</div>
<div class="t" style="top:141.2px;left:1093.6px;color:#c8c8c8;">Rigid Body</div>
<div class="t" style="top:167.0px;left:1093.6px;color:#c8c8c8;">Maya Camera</div>
<div class="a" style="left:1163.5px;top:112.3px;width:102.5px;height:16px;background:#2b2b2b;border-radius:2px;border:1px solid #3a3a3a"></div><div class="t" style="top:116.0px;left:1167.6px;color:#d8d8d8;">127.0.0.1</div>
<div class="a" style="left:1163.5px;top:137.5px;width:103px;height:18.1px;border:1px solid #2e2e2e;border-radius:3px;background:linear-gradient(#616161,#555)"></div><div class="a" style="left:1252.3px;top:138.5px;width:1px;height:16.1px;background:#333"></div><svg class="a" style="left:1255px;top:143.6px" width="9" height="6"><path d="M1 1.5h7l-3.5 3.5z" fill="#dedede"/></svg><div class="t" style="top:142.4px;left:1167.0px;color:#d0d0d0;">GamePad</div>
<div class="a" style="left:1163.5px;top:163.6px;width:103px;height:17.9px;border:1px solid #2e2e2e;border-radius:3px;background:linear-gradient(#616161,#555)"></div><div class="a" style="left:1252.3px;top:164.6px;width:1px;height:15.9px;background:#333"></div><svg class="a" style="left:1255px;top:169.6px" width="9" height="6"><path d="M1 1.5h7l-3.5 3.5z" fill="#dedede"/></svg><div class="t" style="top:168.4px;left:1167.0px;color:#d0d0d0;">cameraShape1</div>
<div class="a" style="left:1046.6px;top:209.3px;width:62px;height:16px;border:1px solid #333;border-bottom:none;border-radius:3px 3px 0 0;background:#474747"></div><div class="t" style="top:212.5px;left:1058.0px;color:#d0d0d0;">Controller</div>
<div class="a" style="left:992px;top:224.5px;width:316px;height:533px;border:1px solid #3c3c3c;border-radius:0 3px 3px 3px;background:#666"></div><div class="a" style="left:992px;top:207.2px;width:54.6px;height:19px;border:1px solid #3c3c3c;border-bottom:none;border-radius:3px 3px 0 0;background:#666"></div><div class="t" style="top:211.4px;left:1002.2px;color:#d8d8d8;">Settings</div>
<div class="t" style="top:245.0px;right:244.7px;text-align:right;color:#dadada;">Enable Axes</div>
<div class="a" style="left:1104.8px;top:237.7px;width:11px;height:11px;background:#2a2a2a;border-radius:1.5px"></div><svg class="a" style="left:1104.8px;top:237.7px" width="11" height="11"><path d="M1.6 5.8l2.5 3 5.3-6.6" stroke="#e0e0e0" stroke-width="1.8" fill="none"/></svg><div class="a" style="left:1104.8px;top:256.5px;width:11px;height:11px;background:#2a2a2a;border-radius:1.5px"></div><svg class="a" style="left:1104.8px;top:256.5px" width="11" height="11"><path d="M1.6 5.8l2.5 3 5.3-6.6" stroke="#e0e0e0" stroke-width="1.8" fill="none"/></svg><div class="t" style="top:238.8px;left:1119.2px;color:#dadada;">X</div>
<div class="t" style="top:257.9px;left:1119.2px;color:#dadada;">Yaw</div>
<div class="a" style="left:1164.8px;top:237.7px;width:11px;height:11px;background:#2a2a2a;border-radius:1.5px"></div><svg class="a" style="left:1164.8px;top:237.7px" width="11" height="11"><path d="M1.6 5.8l2.5 3 5.3-6.6" stroke="#e0e0e0" stroke-width="1.8" fill="none"/></svg><div class="a" style="left:1164.8px;top:256.5px;width:11px;height:11px;background:#2a2a2a;border-radius:1.5px"></div><svg class="a" style="left:1164.8px;top:256.5px" width="11" height="11"><path d="M1.6 5.8l2.5 3 5.3-6.6" stroke="#e0e0e0" stroke-width="1.8" fill="none"/></svg><div class="t" style="top:238.8px;left:1179.2px;color:#dadada;">Y</div>
<div class="t" style="top:257.9px;left:1179.2px;color:#dadada;">Pitch</div>
<div class="a" style="left:1223.7px;top:237.7px;width:11px;height:11px;background:#2a2a2a;border-radius:1.5px"></div><svg class="a" style="left:1223.7px;top:237.7px" width="11" height="11"><path d="M1.6 5.8l2.5 3 5.3-6.6" stroke="#e0e0e0" stroke-width="1.8" fill="none"/></svg><div class="a" style="left:1223.7px;top:256.5px;width:11px;height:11px;background:#2a2a2a;border-radius:1.5px"></div><svg class="a" style="left:1223.7px;top:256.5px" width="11" height="11"><path d="M1.6 5.8l2.5 3 5.3-6.6" stroke="#e0e0e0" stroke-width="1.8" fill="none"/></svg><div class="t" style="top:238.8px;left:1238.1px;color:#dadada;">Z</div>
<div class="t" style="top:257.9px;left:1238.1px;color:#dadada;">Roll</div>
<div class="t" style="top:291.2px;right:244.7px;text-align:right;color:#dadada;">Scale Translation</div>
<div class="t" style="top:316.7px;right:244.7px;text-align:right;color:#dadada;">Offset Translation</div>
<div class="a" style="left:1105.9px;top:288.1px;width:46.2px;height:14.2px;background:#2b2b2b;border-radius:2px 0 0 2px"></div><div class="a" style="left:1152.1px;top:287.3px;width:13.5px;height:7.9px;background:#5c5c5c;border:1px solid #484848;border-radius:2px"></div><div class="a" style="left:1152.1px;top:295.2px;width:13.5px;height:7.9px;background:#5c5c5c;border:1px solid #484848;border-radius:2px"></div><svg class="a" style="left:1152.1px;top:287.3px" width="14" height="15.8"><path d="M3.5 5.7l3.3-3 3.3 3z M3.5 10.1l3.3 3 3.3-3z" fill="#e4e4e4"/></svg><div class="t" style="top:290.8px;left:1109.9px;color:#d8d8d8;">1.00</div>
<div class="a" style="left:1105.9px;top:313.2px;width:46.2px;height:14.1px;background:#2b2b2b;border-radius:2px 0 0 2px"></div><div class="a" style="left:1152.1px;top:312.4px;width:13.5px;height:7.9px;background:#5c5c5c;border:1px solid #484848;border-radius:2px"></div><div class="a" style="left:1152.1px;top:320.2px;width:13.5px;height:7.9px;background:#5c5c5c;border:1px solid #484848;border-radius:2px"></div><svg class="a" style="left:1152.1px;top:312.4px" width="14" height="15.7"><path d="M3.5 5.7l3.3-3 3.3 3z M3.5 10.1l3.3 3 3.3-3z" fill="#e4e4e4"/></svg><div class="t" style="top:315.9px;left:1109.9px;color:#d8d8d8;">0.00</div>
<div class="a" style="left:1172.4px;top:288.1px;width:46.3px;height:14.2px;background:#2b2b2b;border-radius:2px 0 0 2px"></div><div class="a" style="left:1218.7px;top:287.3px;width:13.5px;height:7.9px;background:#5c5c5c;border:1px solid #484848;border-radius:2px"></div><div class="a" style="left:1218.7px;top:295.2px;width:13.5px;height:7.9px;background:#5c5c5c;border:1px solid #484848;border-radius:2px"></div><svg class="a" style="left:1218.7px;top:287.3px" width="14" height="15.8"><path d="M3.5 5.7l3.3-3 3.3 3z M3.5 10.1l3.3 3 3.3-3z" fill="#e4e4e4"/></svg><div class="t" style="top:290.8px;left:1176.4px;color:#d8d8d8;">1.00</div>
<div class="a" style="left:1172.4px;top:313.2px;width:46.3px;height:14.1px;background:#2b2b2b;border-radius:2px 0 0 2px"></div><div class="a" style="left:1218.7px;top:312.4px;width:13.5px;height:7.9px;background:#5c5c5c;border:1px solid #484848;border-radius:2px"></div><div class="a" style="left:1218.7px;top:320.2px;width:13.5px;height:7.9px;background:#5c5c5c;border:1px solid #484848;border-radius:2px"></div><svg class="a" style="left:1218.7px;top:312.4px" width="14" height="15.7"><path d="M3.5 5.7l3.3-3 3.3 3z M3.5 10.1l3.3 3 3.3-3z" fill="#e4e4e4"/></svg><div class="t" style="top:315.9px;left:1176.4px;color:#d8d8d8;">0.00</div>
<div class="a" style="left:1238.8px;top:288.1px;width:46.3px;height:14.2px;background:#2b2b2b;border-radius:2px 0 0 2px"></div><div class="a" style="left:1285.1px;top:287.3px;width:13.5px;height:7.9px;background:#5c5c5c;border:1px solid #484848;border-radius:2px"></div><div class="a" style="left:1285.1px;top:295.2px;width:13.5px;height:7.9px;background:#5c5c5c;border:1px solid #484848;border-radius:2px"></div><svg class="a" style="left:1285.1px;top:287.3px" width="14" height="15.8"><path d="M3.5 5.7l3.3-3 3.3 3z M3.5 10.1l3.3 3 3.3-3z" fill="#e4e4e4"/></svg><div class="t" style="top:290.8px;left:1242.8px;color:#d8d8d8;">1.00</div>
<div class="a" style="left:1238.8px;top:313.2px;width:46.3px;height:14.1px;background:#2b2b2b;border-radius:2px 0 0 2px"></div><div class="a" style="left:1285.1px;top:312.4px;width:13.5px;height:7.9px;background:#5c5c5c;border:1px solid #484848;border-radius:2px"></div><div class="a" style="left:1285.1px;top:320.2px;width:13.5px;height:7.9px;background:#5c5c5c;border:1px solid #484848;border-radius:2px"></div><svg class="a" style="left:1285.1px;top:312.4px" width="14" height="15.7"><path d="M3.5 5.7l3.3-3 3.3 3z M3.5 10.1l3.3 3 3.3-3z" fill="#e4e4e4"/></svg><div class="t" style="top:315.9px;left:1242.8px;color:#d8d8d8;">0.00</div>
<div class="t" style="top:341.9px;right:244.7px;text-align:right;color:#dadada;">Offset Translation Mode</div>
<div class="a" style="left:1104.8px;top:337.4px;width:145.5px;height:18px;border:1px solid #3a3a3a;border-radius:3px;background:linear-gradient(#6e6e6e,#636363)"></div><div class="a" style="left:1236px;top:338.4px;width:1px;height:16px;background:#444"></div><svg class="a" style="left:1239px;top:343.4px" width="9" height="6"><path d="M1 1.5h7l-3.5 3.5z" fill="#dedede"/></svg><div class="t" style="top:342.0px;left:1108.5px;color:#dadada;">Global</div>
<div class="t" style="top:366.7px;right:244.7px;text-align:right;color:#dadada;">Scale Updates Offset</div>
<div class="a" style="left:1104.8px;top:365.3px;width:11px;height:11px;background:#2a2a2a;border-radius:1.5px"></div><div class="t" style="top:392.2px;right:244.7px;text-align:right;color:#dadada;">Smooth Translation</div>
<div class="a" style="left:1104.8px;top:390.8px;width:11px;height:11px;background:#2a2a2a;border-radius:1.5px"></div><svg class="a" style="left:1104.8px;top:390.8px" width="11" height="11"><path d="M1.6 5.8l2.5 3 5.3-6.6" stroke="#e0e0e0" stroke-width="1.8" fill="none"/></svg><div class="a" style="left:1123px;top:389.2px;width:36.1px;height:15.0px;background:#2b2b2b;border-radius:2px 0 0 2px"></div><div class="a" style="left:1159.1px;top:388.4px;width:13.5px;height:8.3px;background:#5c5c5c;border:1px solid #484848;border-radius:2px"></div><div class="a" style="left:1159.1px;top:396.7px;width:13.5px;height:8.3px;background:#5c5c5c;border:1px solid #484848;border-radius:2px"></div><svg class="a" style="left:1159.1px;top:388.4px" width="14" height="16.6"><path d="M3.5 6.1l3.3-3 3.3 3z M3.5 10.5l3.3 3 3.3-3z" fill="#e4e4e4"/></svg><div class="t" style="top:392.3px;left:1127.0px;color:#d8d8d8;">2.00</div>
<div class="t" style="top:417.4px;right:244.7px;text-align:right;color:#dadada;">Smooth Rotation</div>
<div class="a" style="left:1104.8px;top:416px;width:11px;height:11px;background:#2a2a2a;border-radius:1.5px"></div><svg class="a" style="left:1104.8px;top:416px" width="11" height="11"><path d="M1.6 5.8l2.5 3 5.3-6.6" stroke="#e0e0e0" stroke-width="1.8" fill="none"/></svg><div class="a" style="left:1123px;top:414.6px;width:36.1px;height:14.8px;background:#2b2b2b;border-radius:2px 0 0 2px"></div><div class="a" style="left:1159.1px;top:413.8px;width:13.5px;height:8.2px;background:#5c5c5c;border:1px solid #484848;border-radius:2px"></div><div class="a" style="left:1159.1px;top:422.0px;width:13.5px;height:8.2px;background:#5c5c5c;border:1px solid #484848;border-radius:2px"></div><svg class="a" style="left:1159.1px;top:413.8px" width="14" height="16.4"><path d="M3.5 6.0l3.3-3 3.3 3z M3.5 10.4l3.3 3 3.3-3z" fill="#e4e4e4"/></svg><div class="t" style="top:417.6px;left:1127.0px;color:#d8d8d8;">1.00</div>
<div class="t" style="top:443.2px;right:244.7px;text-align:right;color:#dadada;">Connection Type</div>
<svg class="a" style="left:1100px;top:440px" width="80" height="16"><circle cx="9.8" cy="7.7" r="4.5" fill="#2b2b2b"/><circle cx="69.6" cy="7.7" r="4.5" fill="#2b2b2b"/><circle cx="69.6" cy="7.7" r="2.2" fill="#e8e8e8"/></svg><div class="t" style="top:443.2px;left:1120.9px;color:#dadada;">Unicast</div>
<div class="t" style="top:443.2px;left:1180.0px;color:#dadada;">Multicast</div>
<div class="t" style="top:468.0px;right:244.7px;text-align:right;color:#dadada;">Euler Order</div>
<div class="a" style="left:1105.4px;top:466.3px;width:59px;height:15px;background:#2b2b2b;border-radius:2px"></div><div class="t" style="top:468.7px;left:1108.5px;color:#e0e0e0;">6</div>
<div class="t" style="top:493.7px;right:244.7px;text-align:right;color:#dadada;">Mocap Channels</div>
<div class="a" style="left:1104.8px;top:493.3px;width:11px;height:11px;background:#2a2a2a;border-radius:1.5px"></div><div class="t" style="top:519.4px;right:244.7px;text-align:right;color:#dadada;">Verbose</div>
<div class="a" style="left:1104.8px;top:518.8px;width:11px;height:11px;background:#2a2a2a;border-radius:1.5px"></div><div class="t" style="top:545.1px;right:244.7px;text-align:right;color:#dadada;">Sample Rate</div>
<div class="a" style="left:1105.4px;top:543.4px;width:59px;height:15px;background:#2b2b2b;border-radius:2px"></div><div class="t" style="top:545.8px;left:1108.5px;color:#e0e0e0;">100.0</div>
<div class="t" style="top:572.1px;right:244.7px;text-align:right;color:#dadada;">Show Timing Data</div>
<div class="a" style="left:1104.8px;top:571.2px;width:11px;height:11px;background:#2a2a2a;border-radius:1.5px"></div><div class="a" style="left:1317px;top:7px;width:18px;height:218px;background:#3f3f3f"></div><div class="a" style="left:1317px;top:292px;width:18px;height:1.2px;background:#2e2e2e"></div><div class="a" style="left:1319px;top:9.7px;width:13.5px;height:83.5px;background:#4a4a4a;border:1px solid #3a3a3a;border-radius:2px 2px 0 0"></div><div class="a" style="left:1318px;top:93px;width:16px;height:132px;background:#454545;border:1px solid #383838"></div><div class="a" style="left:1317px;top:225px;width:17.5px;height:68px;background:#5e5e5e;border:1px solid #3a3a3a"></div><div class="t" style="left:1326px;top:50px;color:#cfcfcf;font-size:9.2px;transform:translate(-50%,-50%) rotate(90deg);">Attribute Editor</div>
<div class="t" style="left:1326px;top:159px;color:#cfcfcf;font-size:9.2px;transform:translate(-50%,-50%) rotate(90deg);">Channel Box / Layer Editor</div>
<div class="t" style="left:1326px;top:259px;color:#cfcfcf;font-size:9.2px;transform:translate(-50%,-50%) rotate(90deg);">Insight VCS</div>

</body></html>
